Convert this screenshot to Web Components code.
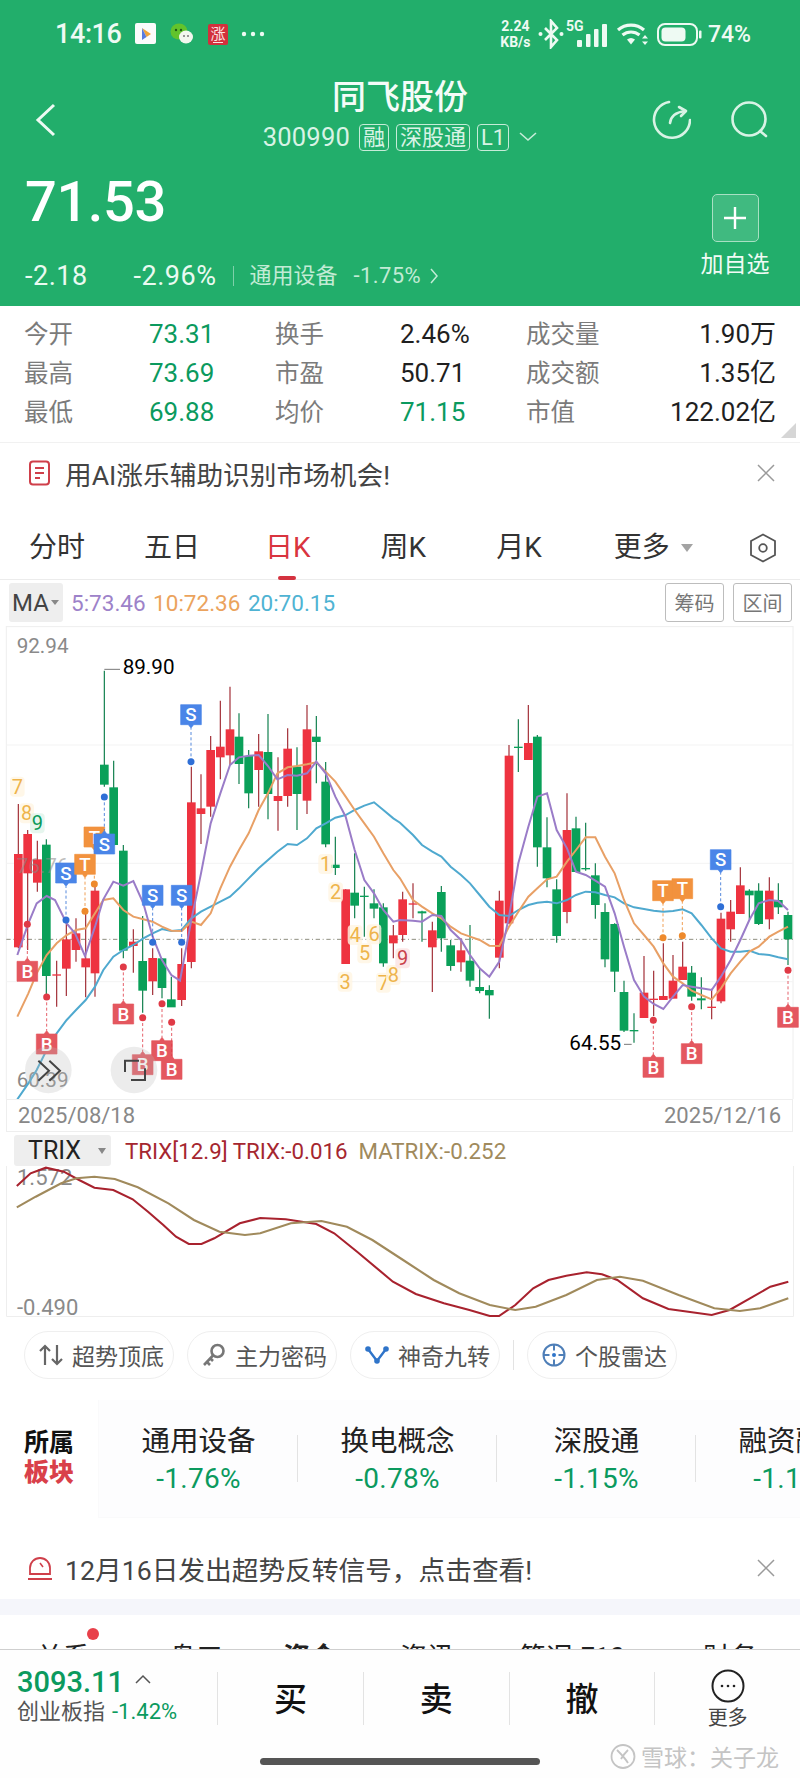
<!DOCTYPE html>
<html lang="zh">
<head>
<meta charset="utf-8">
<title>同飞股份</title>
<style>
   html, body { margin: 0; padding: 0; background: #fff; }
   body { width: 800px; height: 1778px; overflow: hidden; font-family: Roboto, "Noto Sans CJK SC", sans-serif; color: #222; }
   .scroll { height: 1649px; overflow: hidden; }
</style>
</head>
<body>
<div class="scroll">
   <stock-header></stock-header>
   <stock-stats>
      <stat-item label="今开" tone="down">73.31</stat-item>
      <stat-item label="换手">2.46%</stat-item>
      <stat-item label="成交量" end>1.90万</stat-item>
      <stat-item label="最高" tone="down">73.69</stat-item>
      <stat-item label="市盈">50.71</stat-item>
      <stat-item label="成交额" end>1.35亿</stat-item>
      <stat-item label="最低" tone="down">69.88</stat-item>
      <stat-item label="均价" tone="down">71.15</stat-item>
      <stat-item label="市值" end>122.02亿</stat-item>
   </stock-stats>
   <tip-banner icon="doc">用AI涨乐辅助识别市场机会!</tip-banner>
   <period-tabs></period-tabs>
   <ma-legend></ma-legend>
   <kline-chart></kline-chart>
   <trix-chart></trix-chart>
   <feature-pills></feature-pills>
   <sector-strip></sector-strip>
   <tip-banner icon="alarm" class="second">12月16日发出超势反转信号，点击查看!</tip-banner>
   <detail-tabs></detail-tabs>
</div>
<trade-bar></trade-bar>

<script>
class StatusBar extends HTMLElement {
   constructor() {
      super();
      this.attachShadow({ mode: 'open' });
      this.shadowRoot.innerHTML = `
         <style>
            :host { display: flex; align-items: center; height: 68px; padding: 0 49px 0 55px; color: #eefaf3; }
            .time { font-size: 27px; font-weight: 500; line-height: 1; width: 66px; letter-spacing: -.4px; }
            svg { display: block; flex: none; }
            .right { margin-left: auto; display: flex; align-items: center; }
            .speed { width: 31px; font-size: 14px; font-weight: 700; line-height: 16px; text-align: center; margin-right: 7px; }
            .signal { position: relative; display: flex; margin: 0 8px 0 13px; height: 27px; }
            .g5 { position: absolute; left: -11px; top: -2px; font-size: 14px; font-weight: 700; line-height: 14px; }
            .pct { font-size: 23px; font-weight: 500; margin-left: 6px; }
         </style>
         <span class="time">14:16</span>
         <svg width="22" height="22" viewBox="0 0 22 22" style="margin-left:14px">
            <rect width="21" height="21" rx="2" fill="#fbfbfb"/>
            <path d="M7 5l9 6-4.500 3z" fill="#f0a33a"/><path d="M7 5v12l4.500-3z" fill="#5a7be0"/><path d="M7 17l9-6-4.500 3z" fill="#d653a0"/>
         </svg>
         <svg width="24" height="22" viewBox="0 0 24 22" style="margin-left:13px">
            <ellipse cx="9" cy="8.500" rx="8.500" ry="8" fill="#62c32c"/>
            <circle cx="6" cy="7" r="1.200" fill="#1d5a14"/><circle cx="11" cy="7" r="1.200" fill="#1d5a14"/>
            <ellipse cx="16" cy="14" rx="7" ry="6.500" fill="#f2f7ee"/>
            <circle cx="14" cy="13" r="1" fill="#777"/><circle cx="18" cy="13" r="1" fill="#777"/>
         </svg>
         <svg width="20" height="21" viewBox="0 0 20 21" style="margin-left:14px">
            <rect width="20" height="21" rx="2" fill="#d2303c"/>
            <text x="10" y="15" text-anchor="middle" font-size="15" fill="#fbe3e3">涨</text>
            <path d="M5 18.500h10" stroke="#fbe3e3"/>
         </svg>
         <svg width="24" height="6" viewBox="0 0 24 6" style="margin-left:13px">
            <circle cx="3" cy="3" r="2.200" fill="#eefaf3"/><circle cx="12" cy="3" r="2.200" fill="#eefaf3"/><circle cx="21" cy="3" r="2.200" fill="#eefaf3"/>
         </svg>
         <div class="right">
            <div class="speed">2.24<br>KB/s</div>
            <svg width="26" height="30" viewBox="0 0 26 30">
               <path d="M7 9l12 12-6 7V2l6 7L7 21" fill="none" stroke="#eefaf3" stroke-width="2.600"/>
               <circle cx="2.500" cy="15" r="2" fill="#eefaf3"/><circle cx="23.500" cy="15" r="2" fill="#eefaf3"/>
            </svg>
            <div class="signal">
               <svg width="31" height="24" viewBox="0 0 31 24" style="margin-top:3px">
                  <rect x="0" y="16" width="5" height="7" rx="1" fill="#eefaf3"/><rect x="9" y="10" width="4.500" height="13" rx="1" fill="#eefaf3"/>
                  <rect x="17" y="5" width="4.500" height="18" rx="1" fill="#eefaf3"/><rect x="25" y="0" width="5" height="23" rx="1" fill="#eefaf3"/>
               </svg>
               <span class="g5">5G</span>
            </div>
            <svg width="34" height="24" viewBox="0 0 34 24">
               <path d="M2 8a20 20 0 0 1 26 0M6.500 13a13.500 13.500 0 0 1 17 0" fill="none" stroke="#eefaf3" stroke-width="3.200"/>
               <path d="M11 17.500a6.500 6.500 0 0 1 8 0L15 22.500z" fill="#eefaf3"/>
               <path d="M29 13l3 3.500h-6zM29 23l3-3.500h-6z" fill="#eefaf3"/>
            </svg>
            <svg width="45" height="23" viewBox="0 0 45 23" style="margin-left:7px">
               <rect x="1" y="1" width="39" height="21" rx="7" fill="none" stroke="#eefaf3" stroke-width="2"/>
               <rect x="4.500" y="4.500" width="24" height="14" rx="4" fill="#eefaf3"/>
               <rect x="42" y="7.500" width="2.500" height="8" rx="1" fill="#eefaf3"/>
            </svg>
            <span class="pct">74%</span>
         </div>
      `;
   }
}
customElements.define('status-bar', StatusBar);

class StockHeader extends HTMLElement {
   constructor() {
      super();
      this.attachShadow({ mode: 'open' });
      this.shadowRoot.innerHTML = `
         <style>
            :host { display: block; height: 306px; background: #22ae6b; color: #fff; }
            .nav { position: relative; display: flex; justify-content: center; height: 83px; }
            .back { position: absolute; left: 35px; top: 35px; }
            .tools { position: absolute; left: 651px; top: 32px; display: flex; gap: 40px; }
            .center { padding-top: 9px; display: flex; flex-direction: column; align-items: center; }
            h1 { margin: 0; font-size: 34px; line-height: 41px; font-weight: 500; color: #f4fcf8; }
            .sub { display: flex; align-items: center; margin-top: 5px; height: 28px; color: #d8f3e5; }
            .code { font-size: 25.500px; margin-right: 9px; letter-spacing: .2px; }
            .tag { border: 1.500px solid #c6ecd8; border-radius: 4px; font-size: 22px; line-height: 25px; padding: 0 3px; margin-right: 7px; height: 25px; }
            .chev { margin-left: 3px; }
            .quote { display: flex; justify-content: space-between; padding: 21px 30px 0 25px; }
            .price { font-size: 56px; font-weight: 500; line-height: 60px; letter-spacing: -.4px; }
            .change { display: flex; align-items: center; margin-top: 30px; height: 28px; color: #eafaf1; font-size: 27px; line-height: 28px; letter-spacing: .5px; }
            .change .pct { margin-left: 46px; }
            .sep { width: 1px; height: 20px; background: #7ed0a9; margin: 0 16px; }
            .sector { color: #c2ebd5; font-size: 22px; letter-spacing: 0; }
            .rate { color: #c2ebd5; font-size: 22px; margin-left: 16px; letter-spacing: .4px; }
            .add { display: flex; flex-direction: column; align-items: center; width: 70px; padding-top: 22px; }
            .box { width: 45px; height: 46px; border: 1px solid #a8e0c3; border-radius: 5px; background: #40ba80; display: flex; align-items: center; justify-content: center; }
            .lbl { font-size: 23px; line-height: 30px; margin-top: 8px; white-space: nowrap; color: #f0fbf5; }
            svg { display: block; }
         </style>
         <status-bar></status-bar>
         <div class="nav">
            <svg class="back" width="22" height="34" viewBox="0 0 22 34"><path d="M19 2L3 17l16 15" fill="none" stroke="#eefaf3" stroke-width="3"/></svg>
            <div class="center">
               <h1>同飞股份</h1>
               <div class="sub">
                  <span class="code">300990</span>
                  <span class="tag">融</span><span class="tag">深股通</span><span class="tag">L1</span>
                  <svg class="chev" width="18" height="10" viewBox="0 0 18 10"><path d="M1 1l8 7 8-7" fill="none" stroke="#c6ecd8" stroke-width="1.600"/></svg>
               </div>
            </div>
            <div class="tools">
               <svg width="40" height="40" viewBox="651 100 40 40" fill="none" stroke="#d8f3e5" stroke-width="2.600" stroke-linecap="round" stroke-linejoin="round">
                  <path d="M669 102A18 18 0 1 0 690 120"/><path d="M670 123Q671 113 685 111"/><path d="M679 107l7 4-5 5"/>
               </svg>
               <svg width="40" height="40" viewBox="731 100 40 40" fill="none" stroke="#d8f3e5" stroke-width="2.600" stroke-linecap="round">
                  <circle cx="749" cy="119" r="16.500"/><path d="M760 131l6 5"/>
               </svg>
            </div>
         </div>
         <div class="quote">
            <div>
               <div class="price">71.53</div>
               <div class="change">
                  <span>-2.18</span><span class="pct">-2.96%</span><span class="sep"></span>
                  <span class="sector">通用设备</span><span class="rate">-1.75%</span>
                  <svg width="8" height="16" viewBox="0 0 8 16" style="margin-left:9px"><path d="M1 1l6 7-6 7" fill="none" stroke="#c2ebd5" stroke-width="1.500"/></svg>
               </div>
            </div>
            <div class="add">
               <div class="box"><svg width="24" height="24" viewBox="0 0 24 24"><path d="M12 1v22M1 12h22" stroke="#fff" stroke-width="2.400"/></svg></div>
               <div class="lbl">加自选</div>
            </div>
         </div>
      `;
   }
}
customElements.define('stock-header', StockHeader);

class StockStats extends HTMLElement {
   constructor() {
      super();
      this.attachShadow({ mode: 'open' });
      this.shadowRoot.innerHTML = `
         <style>
            :host { position: relative; display: grid; grid-template-columns: 251px 251px 250px; grid-auto-rows: 39px; padding: 9px 0 10px 24px; border-bottom: 1px solid #f1f1f1; }
            .corner { position: absolute; right: 4px; bottom: 4px; width: 0; height: 0; border-left: 15px solid transparent; border-bottom: 15px solid #d6d6d6; }
         </style>
         <slot></slot>
         <span class="corner"></span>
      `;
   }
}
customElements.define('stock-stats', StockStats);

class StatItem extends HTMLElement {
   constructor() {
      super();
      this.attachShadow({ mode: 'open' });
      this.shadowRoot.innerHTML = `
         <style>
            :host { display: flex; align-items: center; line-height: 39px; font-size: 26px; color: #1f1f1f; }
            :host([tone="down"]) { color: #0b9a5e; }
            .label { width: 125px; flex: none; font-size: 24.500px; color: #7b7b7b; }
            :host([end]) .val { margin-left: auto; }
         </style>
         <span class="label"></span><span class="val"><slot></slot></span>
      `;
   }
   connectedCallback() {
      this.shadowRoot.querySelector('.label').textContent = this.getAttribute('label');
   }
}
customElements.define('stat-item', StatItem);

class TipBanner extends HTMLElement {
   constructor() {
      super();
      this.attachShadow({ mode: 'open' });
      this.shadowRoot.innerHTML = `
         <style>
            :host { display: flex; align-items: center; height: 60px; padding: 0 25px 0 27px; color: #444; font-size: 26.700px; white-space: nowrap; }
            :host(.second) { height: 62px; margin-top: 19px; }
            .icon { width: 26px; height: 26px; margin-right: 12px; flex: none; }
            .close { margin-left: auto; }
         </style>
         <svg class="icon" viewBox="0 0 26 26"></svg>
         <slot></slot>
         <svg class="close" width="18" height="18" viewBox="0 0 18 18"><path d="M1 1l16 16M17 1L1 17" stroke="#9a9a9a" stroke-width="1.500"/></svg>
      `;
   }
   connectedCallback() {
      const icon = this.shadowRoot.querySelector('.icon');
      if (this.getAttribute('icon') === 'doc') {
         icon.innerHTML = '<rect x="3" y="1.500" width="19" height="23" rx="3" fill="none" stroke="#cf3f4a" stroke-width="2"/><path d="M8 8h9M8 13h9M8 18h5" stroke="#cf3f4a" stroke-width="2"/>';
      } else {
         icon.innerHTML = '<path d="M3 19v-6a10 10 0 0 1 20 0v6z" fill="none" stroke="#cf3f4a" stroke-width="1.800"/><path d="M1 24h24" stroke="#cf3f4a" stroke-width="2"/><path d="M13 8l3 4" stroke="#cf3f4a" stroke-width="1.600"/>';
      }
   }
}
customElements.define('tip-banner', TipBanner);

class PeriodTabs extends HTMLElement {
   constructor() {
      super();
      this.attachShadow({ mode: 'open' });
      this.shadowRoot.innerHTML = `
         <style>
            :host { display: flex; align-items: center; box-sizing: border-box; height: 77px; padding: 26px 23px 13px 29px; gap: 70px; font-size: 28px; line-height: 38px; color: #333; border-bottom: 1px solid #ececec; }
            .tab { position: relative; white-space: nowrap; flex: none; }
            .first { margin-right: -11px; }
            .second { margin-right: -5px; }
            .on { color: #d9343f; }
            .on::after { content: ''; position: absolute; left: 13px; bottom: -13px; width: 18px; height: 4px; border-radius: 2px; background: #d4323f; }
            .more { display: flex; align-items: center; gap: 11px; margin-left: 2px; }
            .arrow { width: 0; height: 0; border: 6px solid transparent; border-top: 8px solid #a3a3a3; border-bottom: 0; }
            svg { margin-left: -14px; display: block; flex: none; }
         </style>
         <span class="tab first">分时</span>
         <span class="tab second">五日</span>
         <span class="tab on">日K</span>
         <span class="tab">周K</span>
         <span class="tab">月K</span>
         <span class="tab more">更多<span class="arrow"></span></span>
         <svg width="28" height="30" viewBox="0 0 28 30"><path d="M14 1.500l12 6.500v14l-12 6.500-12-6.500V8z" fill="none" stroke="#555" stroke-width="1.800"/><circle cx="14" cy="15" r="3.800" fill="none" stroke="#555" stroke-width="1.800"/></svg>
      `;
   }
}
customElements.define('period-tabs', PeriodTabs);

class MaLegend extends HTMLElement {
   constructor() {
      super();
      this.attachShadow({ mode: 'open' });
      this.shadowRoot.innerHTML = `
         <style>
            :host { display: flex; align-items: center; box-sizing: border-box; height: 46px; padding: 3px 8px 4px 9px; font-size: 22.500px; white-space: nowrap; }
            .sel { display: flex; align-items: center; gap: 2px; width: 54px; height: 39px; box-sizing: border-box; padding-left: 3px; background: #eee; border-radius: 3px; font-size: 24px; color: #444; margin-right: 8px; }
            .sel i { width: 0; height: 0; border: 4px solid transparent; border-top: 5px solid #888; border-bottom: 0; }
            span { margin-right: 7.500px; }
            .a { color: #9d82c9; } .b { color: #eba35d; } .c { color: #4fb3d3; }
            .btn { box-sizing: border-box; width: 59px; height: 39px; margin: 0 0 0 9px; border: 1px solid #bdbdbd; border-radius: 3px; font-size: 20px; color: #777; display: flex; align-items: center; justify-content: center; }
            .first { margin-left: auto; }
         </style>
         <div class="sel">MA<i></i></div>
         <span class="a">5:73.46</span><span class="b">10:72.36</span><span class="c">20:70.15</span>
         <div class="btn first">筹码</div><div class="btn">区间</div>
      `;
   }
}
customElements.define('ma-legend', MaLegend);

// chart coords are 3x page px, x from 0, y from the top of the crop at page y 640
const CANDLES_L = [
   [55,492,925,642,922,'r'],[83,570,930,582,700,'r'],[112,602,755,658,728,'r'],[139,598,1065,614,1008,'g'],
   [170,962,1100,1003,1006,'r'],[199,838,1068,898,986,'r'],[228,835,965,880,930,'r'],[257,815,1072,955,982,'r'],
   [285,725,1070,752,1000,'r'],[313,92,440,374,434,'g'],[341,362,618,442,615,'g'],[370,615,955,632,932,'g'],
   [400,868,998,905,918,'r'],[428,828,1118,963,1052,'g'],[458,925,1065,954,1024,'r'],[486,955,1075,955,1044,'g'],
   [514,1010,1100,1078,1102,'g'],[545,925,1098,972,1080,'r'],[574,380,985,487,966,'r'],[603,403,612,505,522,'r'],
   [632,288,530,330,500,'r'],[661,182,418,320,352,'r'],[690,140,375,268,346,'r'],[717,220,432,290,372,'g'],
   [746,330,505,348,460,'g'],[776,282,500,334,390,'r'],[804,222,538,336,462,'g'],[834,352,572,468,483,'r'],
   [863,265,500,326,468,'r'],[891,322,570,380,462,'g'],[921,195,522,268,482,'r'],[949,228,430,290,306,'g'],
   [977,366,622,425,613,'g'],[1006,590,705,674,684,'g'],[1037,748,972,748,972,'r'],[1064,640,835,758,797,'g'],
   [1093,740,890,767,769,'g'],[1122,748,835,790,806,'g'],[1150,790,980,802,970,'g'],[1180,855,955,886,910,'r']
];
const CANDLES_R = [
   [8,755,905,778,885,'r'],[39,730,835,790,793,'r'],[66,812,905,814,820,'g'],[97,845,1056,871,922,'r'],
   [124,738,935,756,895,'g'],[152,900,992,916,978,'g'],[183,895,995,931,967,'r'],[210,855,1040,962,1022,'g'],
   [239,988,1060,1041,1053,'g'],[268,1036,1136,1050,1066,'g'],[298,752,985,782,953,'r'],[327,315,852,347,850,'r'],
   [355,238,396,320,322,'g'],[385,195,360,309,360,'r'],[412,285,680,290,622,'g'],[441,532,742,622,715,'g'],
   [470,718,908,748,888,'g'],[501,460,850,570,816,'r'],[528,530,696,565,696,'g'],[557,548,692,684,686,'g'],
   [586,670,836,706,795,'g'],[615,790,982,816,958,'g'],[644,850,1056,852,995,'g'],[672,1022,1176,1056,1172,'g'],
   [702,1120,1208,1170,1173,'g'],[732,948,1130,1058,1134,'r'],[761,992,1128,1076,1079,'r'],[790,910,1080,1068,1080,'r'],
   [819,945,1075,1022,1076,'r'],[848,905,1020,980,1020,'r'],[875,978,1082,998,1070,'g'],[904,1012,1108,1075,1081,'g'],
   [935,1046,1138,1100,1102,'r'],[963,818,1090,836,1084,'r'],[992,780,905,815,868,'r'],[1021,682,822,736,822,'r'],
   [1048,748,838,752,766,'g'],[1076,730,855,752,852,'g'],[1108,712,868,752,838,'r'],[1135,730,822,780,802,'g'],
   [1164,815,975,825,898,'g']
];
const MA5 = [[52,945],[85,850],[110,790],[140,768],[165,780],[200,850],[225,880],[255,948],[285,860],[310,778],[340,725],[370,737],[400,723],[430,790],[458,890],[486,960],[514,1005],[540,1022],[574,840],[603,700],[632,550],[661,460],[690,375],[717,352],[746,347],[776,345],[804,378],[832,418],[863,405],[891,407],[921,400],[949,365],[977,400],[1006,470],[1037,530],[1064,630],[1093,720],[1122,760],[1150,810],[1180,845],[1200,840],
   [1239,842],[1266,845],[1297,825],[1324,828],[1352,870],[1383,900],[1410,945],[1439,985],[1468,1010],[1498,965],[1527,830],[1555,670],[1585,560],[1612,470],[1641,460],[1670,570],[1701,625],[1728,695],[1757,705],[1786,722],[1815,740],[1844,820],[1872,920],[1902,1020],[1932,1070],[1961,1092],[1990,1107],[2019,1070],[2048,1035],[2075,1040],[2104,1045],[2135,1050],[2163,1010],[2192,960],[2221,900],[2248,840],[2276,790],[2308,780],[2335,783],[2364,810]];
const MA10 = [[52,1130],[85,1060],[110,1000],[140,945],[170,910],[200,885],[228,870],[257,865],[285,820],[310,780],[340,775],[370,810],[400,830],[430,838],[458,845],[486,860],[514,872],[545,873],[574,845],[603,855],[632,820],[661,745],[690,680],[717,630],[746,580],[776,510],[804,460],[832,400],[863,382],[891,378],[921,373],[949,367],[977,395],[1006,425],[1037,470],[1064,510],[1093,550],[1122,590],[1150,640],[1180,690],[1200,715],
   [1239,780],[1266,800],[1297,820],[1324,835],[1352,860],[1383,880],[1410,890],[1439,900],[1468,917],[1498,918],[1527,860],[1555,815],[1585,770],[1612,745],[1641,718],[1670,710],[1701,665],[1728,630],[1757,592],[1786,592],[1815,650],[1844,700],[1872,780],[1902,850],[1932,885],[1961,920],[1990,970],[2019,1010],[2048,1030],[2075,1052],[2104,1065],[2135,1078],[2163,1045],[2192,1000],[2221,965],[2248,935],[2276,920],[2308,890],[2335,875],[2364,860]];
const MA20 = [[52,1378],[85,1330],[110,1290],[140,1230],[170,1180],[200,1140],[228,1110],[257,1080],[285,1040],[310,990],[340,950],[370,930],[400,915],[430,895],[458,880],[486,867],[514,873],[545,870],[574,835],[603,815],[632,800],[661,785],[690,770],[717,745],[746,715],[776,685],[804,660],[832,635],[863,612],[891,615],[921,595],[949,565],[977,550],[1006,533],[1037,525],[1064,510],[1093,497],[1122,487],[1150,510],[1180,535],[1200,548],
   [1239,585],[1266,615],[1297,635],[1324,650],[1352,680],[1383,705],[1410,730],[1439,765],[1468,800],[1498,825],[1527,828],[1555,810],[1585,795],[1612,788],[1641,785],[1670,790],[1701,780],[1728,765],[1757,755],[1786,757],[1815,765],[1844,772],[1872,790],[1902,802],[1932,807],[1961,812],[1990,815],[2019,813],[2048,808],[2075,820],[2104,855],[2135,895],[2163,925],[2192,935],[2221,935],[2248,932],[2276,942],[2308,945],[2335,952],[2364,958]];
// letter, x, dot y, side of the flag relative to the dot
const SIGNALS = [
   ['T',283,732,-1],['S',313,471,1],['S',198,840,-1],['T',255,814,-1],['S',458,907,-1],['S',545,907,-1],['S',573,365,-1],
   ['B',82,853,1],['B',140,1071,1],['B',370,981,1],['B',428,1133,1],['B',486,1091,1],['B',515,1147,1],
   ['B',1960,1141,1],['B',2075,1100,1],['B',2364,991,1],['T',1989,893,-1],['T',2047,887,-1],['S',2162,800,-1]
];
const TURNS = [
   ['7',52,440,'o'],['8',80,520,'o'],['9',112,550,'g'],['1',977,672,'o'],['2',1007,757,'o'],['3',1035,1025,'o'],['4',1065,885,'o'],
   ['5',1094,940,'o'],['6',1122,883,'o'],['7',1150,1028,'o'],['8',1180,1005,'o'],['9',1208,955,'r']
];

function pts(list) {
   return list.map(p => p.join(',')).join(' ');
}

class KlineChart extends HTMLElement {
   constructor() {
      super();
      this.attachShadow({ mode: 'open' });
      this.shadowRoot.innerHTML = `
         <style>
            :host { display: block; }
            svg { display: block; font-size: 62px; }
            .dates { display: flex; justify-content: space-between; align-items: center; box-sizing: border-box; height: 33px; margin: 0 7px 0 6px; padding: 0 11px; border: 1px solid #eee; font-size: 22px; color: #888; }
         </style>
         <svg width="800" height="473" viewBox="0 -42 2400 1419"></svg>
         <div class="dates"><span>2025/08/18</span><span>2025/12/16</span></div>
      `;
   }
   connectedCallback() {
      const RED = '#ee3340', GREEN = '#0aa059';
      let s = '<path d="M19 -42V1377M2379 -42V1377M19 -40H2379" stroke="#eee" stroke-width="3" fill="none"/>';
      s += '<path d="M19 315H2379M19 670H2379M19 1025H2379" stroke="#f3f3f3" stroke-width="3"/>';
      s += '<path d="M19 898H2379" stroke="#8f8f80" stroke-width="3" stroke-dasharray="13 8 3 8"/>';
      const all = CANDLES_L.concat(CANDLES_R.map(c => [c[0] + 1200].concat(c.slice(1))));
      for (const [x, wt, wb, bt, bb, k] of all) {
         s += `<path d="M${x} ${wt}V${wb}" stroke="${k === 'r' ? '#a02a33' : '#0b7d4a'}" stroke-width="3.500"/>`;
         s += `<rect x="${x - 13}" y="${bt}" width="26" height="${Math.max(bb - bt, 4)}" fill="${k === 'r' ? RED : GREEN}"/>`;
      }
      s += '<path d="M313 88H360M1872 1213H1895" stroke="#777" stroke-width="3"/>';
      s += `<g fill="#8a8a8a"><text x="50" y="40">92.94</text><text x="50" y="1342">60.39</text><text x="50" y="700" opacity=".55">76.76</text></g>`;
      s += '<g fill="#000"><text x="368" y="103">89.90</text><text x="1708" y="1231">64.55</text></g>';
      s += `<polyline points="${pts(MA20)}" fill="none" stroke="#4fa9cf" stroke-width="6"/>`;
      s += `<polyline points="${pts(MA10)}" fill="none" stroke="#e8a066" stroke-width="6"/>`;
      s += `<polyline points="${pts(MA5)}" fill="none" stroke="#9a7cc8" stroke-width="6"/>`;
      for (const [d, x, y, k] of TURNS) {
         const halo = k === 'g' ? '#e0f4ea' : k === 'r' ? '#fbe2e2' : '#fff5e2';
         const ink = k === 'g' ? '#0a9a5a' : k === 'r' ? '#c9404a' : '#eeb44c';
         s += `<rect x="${x - 22}" y="${y - 30}" width="44" height="60" rx="12" fill="${halo}" opacity=".8"/>`;
         s += `<text x="${x}" y="${y + 21}" text-anchor="middle" font-size="60" fill="${ink}">${d}</text>`;
      }
      const FLAG = { S: '#4a85e8', T: '#f2923e', B: '#e4575f' };
      const DOT = { S: '#2f6fd6', T: '#ee8a2c', B: '#e03a46' };
      for (const [l, x, dy, side] of SIGNALS) {
         const cy = dy + side * 141;
         const top = cy - 30, bot = cy + 30;
         const tip = side < 0 ? `L${x + 8} ${bot}L${x} ${bot + 10}L${x - 8} ${bot}` : '';
         const cap = side > 0 ? `L${x - 8} ${top}L${x} ${top - 10}L${x + 8} ${top}` : '';
         s += `<path d="M${x} ${dy}V${cy - side * 40}" stroke="${DOT[l]}" stroke-width="3" stroke-dasharray="9 7" opacity=".8"/>`;
         s += `<circle cx="${x}" cy="${dy}" r="10.500" fill="${DOT[l]}"/>`;
         s += `<path d="M${x - 31} ${top}${cap}H${x + 31}V${bot}${tip}H${x - 31}Z" fill="${FLAG[l]}" stroke="${FLAG[l]}" stroke-width="2" stroke-linejoin="round"/>`;
         s += `<text x="${x}" y="${cy + 20}" text-anchor="middle" font-size="56" font-weight="500" fill="#fff">${l}</text>`;
      }
      s += '<circle cx="145" cy="1290" r="70" fill="#b9b9b9" opacity=".28"/><circle cx="402" cy="1290" r="70" fill="#b9b9b9" opacity=".28"/>';
      s += '<path d="M115 1262l32 30-32 30M148 1262l32 30-32 30M375 1296v-34h42M435 1285v35h-42" fill="none" stroke="#444" stroke-width="6"/>';
      this.shadowRoot.querySelector('svg').innerHTML = s;
   }
}
customElements.define('kline-chart', KlineChart);

const TRIX_LINE = [[33,288],[60,250],[90,233],[125,245],[155,270],[185,293],[222,300],[260,328],[290,365],[320,405],[345,440],[370,462],[395,462],[420,445],[470,400],[510,384],[560,388],[620,402],[655,430],[700,485],[770,575],[815,612],[870,640],[920,660],[960,678],[978,678],[1010,645],[1045,595],[1075,570],[1110,557],[1150,547],[1180,553],[1210,570],[1260,625],[1310,657],[1395,675],[1430,660],[1470,625],[1510,590],[1545,575]];
const MATRIX_LINE = [[33,352],[70,320],[120,280],[150,265],[185,260],[225,267],[270,292],[330,340],[380,390],[430,425],[480,435],[510,430],[570,400],[630,393],[680,410],[730,450],[790,510],[850,570],[900,610],[960,645],[1010,660],[1050,650],[1110,615],[1170,570],[1215,560],[1260,572],[1330,615],[1400,655],[1450,663],[1490,655],[1545,625]];

class TrixChart extends HTMLElement {
   constructor() {
      super();
      this.attachShadow({ mode: 'open' });
      this.shadowRoot.innerHTML = `
         <style>
            :host { display: block; }
            .head { display: flex; align-items: center; box-sizing: border-box; height: 34px; padding: 3px 0 0 14px; font-size: 22.300px; white-space: nowrap; }
            .sel { display: flex; align-items: center; box-sizing: border-box; width: 97px; height: 31px; padding-left: 14px; background: #eee; border-radius: 3px; font-size: 25px; color: #222; margin-right: 14px; }
            .sel i { margin-left: 17px; width: 0; height: 0; border: 4.500px solid transparent; border-top: 6px solid #888; border-bottom: 0; }
            .t { color: #a5262f; margin-right: 11px; }
            .m { color: #a08a5c; }
            svg { display: block; font-size: 22px; }
         </style>
         <div class="head"><div class="sel">TRIX<i></i></div><span class="t">TRIX[12.9] TRIX:-0.016</span><span class="m">MATRIX:-0.252</span></div>
         <svg width="800" height="151" viewBox="0 1166 800 151"></svg>
      `;
   }
   connectedCallback() {
      const map = list => pts(list.map(p => [(p[0] / 1.96).toFixed(1), (1090 + p[1] / 3).toFixed(1)]));
      this.shadowRoot.querySelector('svg').innerHTML = `
         <path d="M6.500 1166V1316.500H793.500V1166" fill="none" stroke="#eee"/>
         <g fill="#8a8a8a"><text x="17" y="1185">1.572</text><text x="17" y="1315">-0.490</text></g>
         <polyline points="${map(TRIX_LINE)}" fill="none" stroke="#a8222e" stroke-width="2.100"/>
         <polyline points="${map(MATRIX_LINE)}" fill="none" stroke="#a08a5c" stroke-width="2.100"/>
      `;
   }
}
customElements.define('trix-chart', TrixChart);

class FeaturePills extends HTMLElement {
   constructor() {
      super();
      this.attachShadow({ mode: 'open' });
      this.shadowRoot.innerHTML = `
         <style>
            :host { display: flex; align-items: center; box-sizing: border-box; height: 83px; padding: 0 0 7px 24px; gap: 13px; font-size: 23px; color: #555; }
            .pill { display: flex; align-items: center; box-sizing: border-box; width: 150px; height: 48px; padding-left: 14px; border: 1px solid #efefef; border-radius: 24px; gap: 9px; white-space: nowrap; }
            .pill svg { width: 24px; height: 24px; flex: none; }
            .sep { width: 1px; height: 30px; background: #e3e3e3; }
         </style>
         <div class="pill"><svg viewBox="0 0 24 24" fill="none" stroke="#666" stroke-width="2.200"><path d="M6 22V3M1 8l5-5 5 5M18 2v19M13 16l5 5 5-5"/></svg>超势顶底</div>
         <div class="pill"><svg viewBox="0 0 24 24" fill="none" stroke="#777" stroke-width="2.600"><circle cx="15.500" cy="8" r="6"/><path d="M11 12.500L2 22M5 19l3 3M8.500 15.500l2.500 2.500"/></svg>主力密码</div>
         <div class="pill"><svg viewBox="0 0 24 24" fill="none" stroke="#2f74c9" stroke-width="2.400"><path d="M3 6l9 12 9-12"/><circle cx="3" cy="6" r="2.800" fill="#2f74c9" stroke="none"/><circle cx="21" cy="6" r="2.800" fill="#2f74c9" stroke="none"/><circle cx="12" cy="18" r="2.800" fill="#2f74c9" stroke="none"/></svg>神奇九转</div>
         <span class="sep"></span>
         <div class="pill"><svg viewBox="0 0 24 24" fill="none" stroke="#4f7fb8" stroke-width="2"><circle cx="12" cy="12" r="10.500"/><path d="M12 1.500v6M12 16.500v6M1.500 12h6M16.500 12h6"/><circle cx="12" cy="12" r="2" fill="#2f74c9" stroke="none"/></svg>个股雷达</div>
      `;
   }
}
customElements.define('feature-pills', FeaturePills);

class SectorStrip extends HTMLElement {
   constructor() {
      super();
      this.attachShadow({ mode: 'open' });
      this.shadowRoot.innerHTML = `
         <style>
            :host { display: flex; height: 118px; overflow: hidden; }
            .title { width: 74px; flex: none; padding: 28px 0 0 24px; font-size: 25px; line-height: 30px; font-weight: 700; color: #111; }
            .title b { display: block; color: #d9404a; }
            .list { display: flex; flex: none; background: #fdfdfe; border-left: 1px solid #fafafb; border-bottom: 1px solid #fafafb; }
            .item { position: relative; box-sizing: border-box; width: 199px; padding-top: 23px; text-align: center; white-space: nowrap; }
            .item::after { content: ''; position: absolute; right: 0; top: 35px; width: 1px; height: 47px; background: #e3e3e3; }
            .name { font-size: 28.500px; line-height: 37px; color: #222; }
            .val { font-size: 28px; line-height: 37px; color: #0b9a5e; letter-spacing: .3px; }
         </style>
         <div class="title">所属<b>板块</b></div>
         <div class="list">
            <div class="item"><div class="name">通用设备</div><div class="val">-1.76%</div></div>
            <div class="item"><div class="name">换电概念</div><div class="val">-0.78%</div></div>
            <div class="item"><div class="name">深股通</div><div class="val">-1.15%</div></div>
            <div class="item"><div class="name">融资融券</div><div class="val">-1.12%</div></div>
         </div>
      `;
   }
}
customElements.define('sector-strip', SectorStrip);

class DetailTabs extends HTMLElement {
   constructor() {
      super();
      this.attachShadow({ mode: 'open' });
      this.shadowRoot.innerHTML = `
         <style>
            :host { display: block; box-sizing: border-box; height: 50px; border-top: 16px solid #f5f6fb; overflow: hidden; }
            .row { display: flex; padding: 24px 0 0 36px; font-size: 27px; line-height: 38px; color: #222; white-space: nowrap; }
            .row span { position: relative; }
            .row span:nth-child(1) { width: 133px; }
            .row span:nth-child(2) { width: 114px; }
            .row span:nth-child(3) { width: 117px; font-weight: 700; }
            .row span:nth-child(4) { width: 119px; }
            .row span:nth-child(5) { width: 184px; }
            i { position: absolute; left: 51px; top: -11px; width: 12px; height: 12px; border-radius: 50%; background: #e8404a; }
         </style>
         <div class="row"><span>关系<i></i></span><span>盘口</span><span>资金</span><span>资讯</span><span>简况 F10</span><span>财务</span></div>
      `;
   }
}
customElements.define('detail-tabs', DetailTabs);

class TradeBar extends HTMLElement {
   constructor() {
      super();
      this.attachShadow({ mode: 'open' });
      this.shadowRoot.innerHTML = `
         <style>
            :host { position: relative; display: block; box-sizing: border-box; height: 129px; background: #fefefe; border-top: 1px solid #cfcfcf; }
            .row { display: flex; height: 76px; }
            .index { box-sizing: border-box; width: 217px; flex: none; padding: 17px 0 0 17px; white-space: nowrap; }
            .pt { display: flex; align-items: center; font-size: 29px; font-weight: 500; line-height: 30px; color: #0b9a5e; }
            .pt svg { margin-left: 11px; margin-top: -6px; }
            .nm { font-size: 22px; line-height: 30px; color: #555; }
            .nm em { font-style: normal; color: #0b9a5e; margin-left: 7px; }
            .act { box-sizing: border-box; width: 146px; height: 53px; margin-top: 22px; padding-bottom: 4px; border-left: 1px solid #e3e3e3; display: flex; align-items: center; justify-content: center; font-size: 33px; font-weight: 500; color: #111; }
            .more { flex-direction: column; justify-content: flex-start; padding-bottom: 0; font-size: 20px; font-weight: 400; color: #444; }
            .more svg { margin-top: -3px; display: block; flex: none; }
            .more span { line-height: 28px; flex: none; margin-top: 1px; }
            .home { width: 280px; height: 7px; margin: 32px auto 0; border-radius: 4px; background: #555; }
            .mark { position: absolute; left: 610px; top: 89px; display: flex; align-items: center; gap: 5px; font-size: 23px; color: #c4c4c4; white-space: nowrap; }
         </style>
         <div class="row">
            <div class="index">
               <div class="pt">3093.11<svg width="16" height="10" viewBox="0 0 16 10"><path d="M1 9l7-7 7 7" fill="none" stroke="#555" stroke-width="1.500"/></svg></div>
               <div class="nm">创业板指<em>-1.42%</em></div>
            </div>
            <div class="act">买</div><div class="act">卖</div><div class="act">撤</div>
            <div class="act more">
               <svg width="34" height="34" viewBox="0 0 34 34"><circle cx="17" cy="17" r="15.500" fill="none" stroke="#222" stroke-width="2"/><circle cx="11" cy="17" r="1.300" fill="#222"/><circle cx="17" cy="17" r="1.300" fill="#222"/><circle cx="23" cy="17" r="1.300" fill="#222"/></svg>
               <span>更多</span>
            </div>
         </div>
         <div class="home"></div>
         <div class="mark">
            <svg width="26" height="27" viewBox="0 0 26 27" fill="none" stroke="#c4c4c4" stroke-width="1.800"><circle cx="13" cy="13.500" r="11.500"/><path d="M7 7c4 4 8 8 11 13M18 7c-3 3-5 5-7 9"/></svg>
            雪球：关子龙
         </div>
      `;
   }
}
customElements.define('trade-bar', TradeBar);
</script>
</body>
</html>
